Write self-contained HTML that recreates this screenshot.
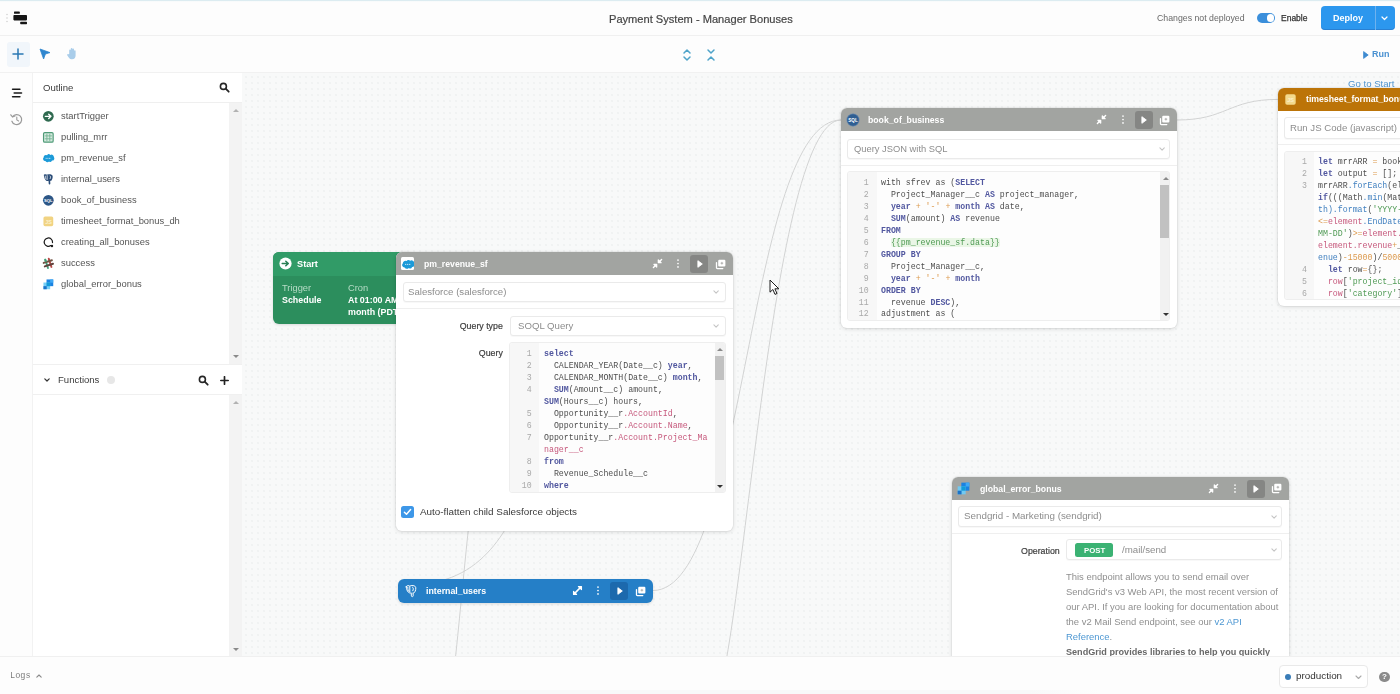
<!DOCTYPE html>
<html lang="en">
<head>
<meta charset="utf-8">
<title>Payment System - Manager Bonuses</title>
<style>
*{box-sizing:border-box;margin:0;padding:0}
html,body{width:1400px;height:694px;overflow:hidden;background:#fdfdfd;font-family:"Liberation Sans",sans-serif;color:#3a3a3a}
.abs{position:absolute}
.t,.oi,.ttl,.tx,.lbl,.ln,.cl{will-change:transform}
.t{position:absolute;white-space:pre;line-height:1}
.mono{font-family:"Liberation Mono",monospace}
#topbar{position:absolute;left:0;top:0;width:1400px;height:36px;background:#fdfdfd;border-bottom:1px solid #f0f0f0}
#topline{position:absolute;left:0;top:0;width:1400px;height:2px;background:linear-gradient(#dcecf1,#dcecf1 50%,#f4f9fa 50%,#fdfdfd)}
#toolbar{position:absolute;left:0;top:36px;width:1400px;height:37px;background:#fdfdfd;border-bottom:1px solid #f1f1f1}
#rail{position:absolute;left:0;top:73px;width:33px;height:583px;background:#fdfdfd;border-right:1px solid #f2f2f2}
#outline{position:absolute;left:33px;top:73px;width:209px;height:583px;background:#fff}
#canvas{position:absolute;left:242px;top:73px;width:1158px;height:583px;overflow:hidden;background-color:#f8f9f9;
 background-image:radial-gradient(circle,#f0f2f2 0.7px,rgba(240,242,242,0) 1.2px);background-size:6px 6px;background-position:1px 1px}
#bottombar{position:absolute;left:0;top:656px;width:1400px;height:38px;background:#fdfdfd;border-top:1px solid #f0f0f0}
.sbar{position:absolute;background:#f3f3f3}
.tri-up{position:absolute;width:0;height:0;border-left:3px solid transparent;border-right:3px solid transparent;border-bottom:3.5px solid #9a9a9a}
.tri-dn{position:absolute;width:0;height:0;border-left:3px solid transparent;border-right:3px solid transparent;border-top:3.5px solid #555}
.oi{position:absolute;left:60.5px;font-size:9.4px;color:#555;white-space:pre;line-height:12px}
.ico{position:absolute}
/* blocks */
.blk{position:absolute;background:#fff;border-radius:6px;box-shadow:0 1px 4px rgba(0,0,0,.13),0 0 0 1px rgba(0,0,0,.035)}
.hdr{position:absolute;left:0;top:0;right:0;height:23px;background:#a2a4a1;border-radius:6px 6px 0 0}
.ttl{position:absolute;top:1px;height:23px;line-height:23.5px;font-size:8.7px;font-weight:700;color:#fff;white-space:pre}
.sel{position:absolute;height:20px;border:1px solid #eaeaea;border-radius:3px;background:#fff;box-shadow:0 1px 1px rgba(0,0,0,.03)}
.sel .tx{position:absolute;left:6px;top:0;line-height:18.5px;font-size:9.65px;color:#8d8d8d;white-space:pre}
.chev{position:absolute;width:7px;height:4px}
.lbl{position:absolute;font-size:8.8px;color:#3d3d3d;white-space:pre;line-height:12px;text-align:right;-webkit-text-stroke:0.2px #3d3d3d}
.code{position:absolute;background:#fdfdfd;border:1px solid #eeeeee;border-radius:3px;overflow:hidden}
.gut{position:absolute;left:0;top:0;bottom:0;background:#f7f7f7}
.ln{position:absolute;font-family:"Liberation Mono",monospace;font-size:8.25px;line-height:12px;color:#a9a9a9;text-align:right;white-space:pre}
.cl{position:absolute;font-family:"Liberation Mono",monospace;font-size:8.25px;line-height:12px;color:#4d4d4d;white-space:pre}
.k{color:#51579f;font-weight:700}
.p{color:#c6587c}
.g{color:#4f9a54}
.o{color:#dc9a4e}
.j{color:#3f7fbf}
.gb{color:#4f9a54;background:#eaf6e6;border-radius:2px}
.hdiv{position:absolute;left:0;right:0;height:1px;background:#efefef}
.pbtn{position:absolute;width:18px;height:18px;border-radius:3px;background:#858684}
</style>
</head>
<body>

<!-- ===== top bar ===== -->
<div id="topbar">
  <div id="topline"></div>
  <!-- drag dots -->
  <svg class="abs" style="left:5px;top:12px" width="4" height="12" viewBox="0 0 4 12"><circle cx="2" cy="2.5" r=".8" fill="#d2d2d2"/><circle cx="2" cy="6" r=".8" fill="#d2d2d2"/><circle cx="2" cy="9.5" r=".8" fill="#d2d2d2"/></svg>
  <!-- retool logo -->
  <svg class="abs" style="left:13px;top:11px" width="15" height="14" viewBox="0 0 15 14">
    <rect x="1" y=".6" width="5.8" height="2.2" rx=".6" fill="#151515"/>
    <rect x=".4" y="4" width="13.6" height="5.4" rx=".8" fill="#151515"/>
    <rect x="7.2" y="10.8" width="6.8" height="2.4" rx=".6" fill="#151515"/>
  </svg>
  <div class="t" style="left:608.5px;top:13.5px;font-size:11.1px;color:#454545;-webkit-text-stroke:.2px #454545">Payment System - Manager Bonuses</div>
  <div class="t" style="left:1156.5px;top:13.5px;font-size:8.75px;color:#686868">Changes not deployed</div>
  <!-- toggle -->
  <div class="abs" style="left:1257px;top:13px;width:18px;height:9.6px;border-radius:5px;background:#3b8fdb"></div>
  <div class="abs" style="left:1266.5px;top:14px;width:7.6px;height:7.6px;border-radius:50%;background:#fff"></div>
  <div class="t" style="left:1281px;top:13.7px;font-size:8.5px;color:#333;-webkit-text-stroke:.25px #333">Enable</div>
  <!-- deploy -->
  <div class="abs" style="left:1320.5px;top:6px;width:74.5px;height:24px;border-radius:4px;background:#2c97ee;box-shadow:inset 0 -1px 0 rgba(40,110,190,.55)"></div>
  <div class="abs" style="left:1375px;top:6px;width:1px;height:24px;background:#6fb2ee"></div>
  <div class="t" style="left:1332.5px;top:13.9px;font-size:9px;font-weight:700;color:#fff">Deploy</div>
  <svg class="abs" style="left:1381px;top:16px" width="7" height="5" viewBox="0 0 7 5"><path d="M1 1 L3.5 3.5 L6 1" fill="none" stroke="#fff" stroke-width="1.2" stroke-linecap="round" stroke-linejoin="round"/></svg>
</div>

<!-- ===== toolbar ===== -->
<div id="toolbar">
  <div class="abs" style="left:6.5px;top:6px;width:23.5px;height:25px;border-radius:3px;background:#f1f6fb"></div>
  <svg class="abs" style="left:11.8px;top:11.8px" width="12" height="12" viewBox="0 0 12 12"><path d="M6 1 V11 M1 6 H11" stroke="#2a78b4" stroke-width="1.5" stroke-linecap="round"/></svg>
  <!-- pointer -->
  <svg class="abs" style="left:39px;top:12.3px" width="12" height="12" viewBox="0 0 12 12"><path d="M1 1 L11 4.6 L6.4 6 L4.6 11 Z" fill="#2f86cf" stroke="#2f86cf" stroke-width=".8" stroke-linejoin="round"/></svg>
  <!-- hand -->
  <svg class="abs" style="left:66px;top:11.2px" width="12" height="13" viewBox="0 0 12 13"><path d="M3.2 7 V3.2 a.8.8 0 0 1 1.6 0 V6 V1.8 a.8.8 0 0 1 1.6 0 V6 V2.4 a.8.8 0 0 1 1.6 0 V6.4 V4 a.8.8 0 0 1 1.6 0 V8.6 a3.6 3.6 0 0 1 -3.6 3.6 H5.6 a3 3 0 0 1 -2.5 -1.3 L1.2 8.2 a.8.8 0 0 1 1.3 -.9 Z" fill="#a9cdea"/></svg>
  <!-- expand / collapse -->
  <svg class="abs" style="left:682px;top:12px" width="10" height="14" viewBox="0 0 10 14"><path d="M2 5 L5 2 L8 5 M2 9 L5 12 L8 9" fill="none" stroke="#4ea3c9" stroke-width="1.5" stroke-linecap="round" stroke-linejoin="round"/></svg>
  <svg class="abs" style="left:706px;top:12px" width="10" height="14" viewBox="0 0 10 14"><path d="M2 2 L5 5 L8 2 M2 12 L5 9 L8 12" fill="none" stroke="#4ea3c9" stroke-width="1.5" stroke-linecap="round" stroke-linejoin="round"/></svg>
  <!-- run -->
  <svg class="abs" style="left:1363px;top:14.5px" width="6" height="8" viewBox="0 0 6 8"><path d="M.6 .6 L5.2 4 L.6 7.4 Z" fill="#3f8bd0" stroke="#3f8bd0" stroke-width=".8" stroke-linejoin="round"/></svg>
  <div class="t" style="left:1372.3px;top:14px;font-size:9px;font-weight:700;color:#4a91d1">Run</div>
</div>

<!-- ===== left rail ===== -->
<div id="rail">
  <svg class="abs" style="left:10.5px;top:14.6px" width="12" height="10" viewBox="0 0 12 10"><path d="M1.6 1.3 H8.9 M3.2 5.05 H10.5 M1.6 8.8 H8.9" stroke="#1a1a1a" stroke-width="1.6" stroke-linecap="round"/></svg>
  <svg class="abs" style="left:10px;top:39.5px" width="13" height="13" viewBox="0 0 13 13"><path d="M2.6 3.6 A5 5 0 1 1 1.9 8.2" fill="none" stroke="#9a9a9a" stroke-width="1.2" stroke-linecap="round"/><path d="M.8 1.8 L2.5 4 L5 3" fill="none" stroke="#9a9a9a" stroke-width="1.2" stroke-linecap="round" stroke-linejoin="round"/><path d="M6.8 4 V6.9 L8.6 8" fill="none" stroke="#9a9a9a" stroke-width="1.1" stroke-linecap="round" stroke-linejoin="round"/></svg>
</div>

<!-- ===== outline panel ===== -->
<div id="outline">
  <div class="t" style="left:9.5px;top:9.5px;font-size:9.55px;color:#3b3b3b">Outline</div>
  <svg class="abs" style="left:186px;top:9px" width="11" height="11" viewBox="0 0 11 11"><circle cx="4.4" cy="4.4" r="3" fill="none" stroke="#262626" stroke-width="1.6"/><path d="M6.7 6.7 L9.7 9.7" stroke="#262626" stroke-width="1.8" stroke-linecap="round"/></svg>
  <div class="hdiv" style="top:29px;background:#efefef"></div>
  <!-- scrollbar 1 -->
  <div class="sbar" style="left:196px;top:30px;width:13px;height:261px"></div>
  <div class="tri-up" style="left:199.5px;top:35.5px;border-bottom-color:#b2b2b2"></div>
  <div class="tri-dn" style="left:199.5px;top:282px;border-top-color:#8a8a8a"></div>
  <!-- outline items -->
  <svg class="ico" style="left:9.15px;top:37.15px" width="12.7" height="12.7" viewBox="0 0 14 14"><circle cx="7" cy="7" r="5.9" fill="#2f6a50"/><path d="M3.6 7 H9.6 M7.4 4.6 L9.9 7 L7.4 9.4" fill="none" stroke="#fff" stroke-width="1.5" stroke-linecap="round" stroke-linejoin="round"/></svg>
  <div class="oi" style="left:27.5px;top:36.8px">startTrigger</div>
  <svg class="ico" style="left:9.15px;top:58.15px" width="12.7" height="12.7" viewBox="0 0 14 14"><rect x="1.7" y="1.7" width="10.6" height="10.6" rx="1.4" fill="#d5eadf" stroke="#4f9b78" stroke-width="1.3"/><path d="M5.4 3 V11 M8.6 3 V11 M3 5.4 H11 M3 8.6 H11" stroke="#6fb08f" stroke-width=".9"/></svg>
  <div class="oi" style="left:27.5px;top:57.8px">pulling_mrr</div>
  <svg class="ico" style="left:9.15px;top:79.15px" width="12.7" height="12.7" viewBox="0 0 14 14"><path d="M5.6 3.6 a2.3 2.3 0 0 1 3.6 -.4 a2.6 2.6 0 0 1 3.9 2.4 a2.4 2.4 0 0 1 -2 3.9 a2.2 2.2 0 0 1 -3.3 .9 a2.5 2.5 0 0 1 -4.1 -.5 a2.3 2.3 0 0 1 -1.9 -3.9 a2.6 2.6 0 0 1 3.8 -2.4 Z" fill="#1c9ad8"/><path d="M4 7 H10" stroke="#bfe4f6" stroke-width="1.1" stroke-dasharray="1.2 .7"/></svg>
  <div class="oi" style="left:27.5px;top:78.8px">pm_revenue_sf</div>
  <svg class="ico" style="left:9.15px;top:100.15px" width="12.7" height="12.7" viewBox="0 0 14 14"><path d="M2 2.2 C2 1 5 1 5.6 2 C6.4 1 11.6 .8 11.8 3.6 C12 6 10.6 8.6 9.8 8.8 C9.4 8.9 9.2 8.4 9 8.4 L9.2 11.6 C9.2 13 7.4 13 7.4 11.8 L7.2 8.6 C5 9.4 2.6 7.8 2 2.2 Z" fill="#2b4d78"/><path d="M5.7 2.4 V7.6 M8.6 3 C9.6 3.4 9.6 5.4 8.8 6.6 M3.6 3 C3.4 4.6 4 6.2 4.6 7" fill="none" stroke="#fff" stroke-width=".8"/></svg>
  <div class="oi" style="left:27.5px;top:99.8px">internal_users</div>
  <svg class="ico" style="left:9.15px;top:121.15px" width="12.7" height="12.7" viewBox="0 0 14 14"><circle cx="7" cy="7" r="5.9" fill="#2c5686"/><text x="7" y="8.7" font-family="Liberation Sans" font-size="4.6" font-weight="700" fill="#fff" text-anchor="middle">SQL</text></svg>
  <div class="oi" style="left:27.5px;top:120.8px">book_of_business</div>
  <svg class="ico" style="left:9.15px;top:142.15px" width="12.7" height="12.7" viewBox="0 0 14 14"><rect x="1.6" y="1.6" width="10.8" height="10.8" rx="1.8" fill="#f1d382"/><text x="7.2" y="9.6" font-family="Liberation Sans" font-size="6" font-weight="700" fill="#fbf1cf" text-anchor="middle">JS</text></svg>
  <div class="oi" style="left:27.5px;top:141.8px">timesheet_format_bonus_dh</div>
  <svg class="ico" style="left:9.15px;top:163.15px" width="12.7" height="12.7" viewBox="0 0 14 14"><path d="M9.6 10.6 A4.6 4.6 0 1 1 11.6 7.2" fill="none" stroke="#1d1d1d" stroke-width="1.35" stroke-linecap="round"/><circle cx="11" cy="11" r="1.35" fill="#1d1d1d"/></svg>
  <div class="oi" style="left:27.5px;top:162.8px">creating_all_bonuses</div>
  <svg class="ico" style="left:9.15px;top:184.15px" width="12.7" height="12.7" viewBox="0 0 14 14"><g transform="rotate(-18 7 7)" stroke-linecap="round" stroke-width="2.1" opacity=".95"><path d="M5 2.2 V11.8" stroke="#3a9a72"/><path d="M9 2.2 V11.8" stroke="#b5403c"/><path d="M2.2 5 H11.8" stroke="#6b4a3a"/><path d="M2.2 9 H11.8" stroke="#5a3a34"/><path d="M5 2.2 V4" stroke="#3a9a72"/></g></svg>
  <div class="oi" style="left:27.5px;top:183.8px">success</div>
  <svg class="ico" style="left:9.15px;top:205.15px" width="12.7" height="12.7" viewBox="0 0 14 14"><rect x="5" y="1.6" width="7.4" height="7.4" fill="#1a82e2"/><rect x="1.6" y="5" width="7.4" height="7.4" fill="#6fcbf6" opacity=".95"/><rect x="5" y="5" width="4" height="4" fill="#129bd9"/><rect x="1.6" y="9" width="3.6" height="3.4" fill="#1a73c9"/><rect x="9" y="1.6" width="3.4" height="3.6" fill="#3fa9f5"/></svg>
  <div class="oi" style="left:27.5px;top:204.8px">global_error_bonus</div>
  <!-- functions -->
  <div class="hdiv" style="top:291px;background:#f0f0f0"></div>
  <svg class="abs" style="left:11px;top:305px" width="6" height="4" viewBox="0 0 6 4"><path d="M.8 .8 L3 3 L5.2 .8" fill="none" stroke="#333" stroke-width="1.2" stroke-linecap="round" stroke-linejoin="round"/></svg>
  <div class="t" style="left:24.5px;top:301.5px;font-size:9.55px;color:#3b3b3b">Functions</div>
  <div class="abs" style="left:74px;top:302.5px;width:8px;height:8px;border-radius:50%;background:#e7e7e7"></div>
  <svg class="abs" style="left:165px;top:301.5px" width="11" height="11" viewBox="0 0 11 11"><circle cx="4.4" cy="4.4" r="3" fill="none" stroke="#262626" stroke-width="1.6"/><path d="M6.7 6.7 L9.7 9.7" stroke="#262626" stroke-width="1.8" stroke-linecap="round"/></svg>
  <svg class="abs" style="left:187px;top:302.5px" width="9" height="9" viewBox="0 0 9 9"><path d="M4.5 .8 V8.2 M.8 4.5 H8.2" stroke="#222" stroke-width="1.7" stroke-linecap="round"/></svg>
  <div class="hdiv" style="top:321px;background:#f0f0f0"></div>
  <div class="sbar" style="left:196px;top:322px;width:13px;height:261px"></div>
  <div class="tri-up" style="left:199.5px;top:328px;border-bottom-color:#b2b2b2"></div>
  <div class="tri-dn" style="left:199.5px;top:575px;border-top-color:#8a8a8a"></div>
</div>

<!-- ===== canvas ===== -->
<div id="canvas"></div>
<div id="cv" class="abs" style="left:0;top:0;width:1400px;height:656px;overflow:hidden">
<svg class="abs" style="left:0;top:0" width="1400" height="656" viewBox="0 0 1400 656"><g fill="none" stroke="#d2d3d3" stroke-width="1">
<path d="M653,590.5 C747,590.5 747,120 841,120"/>
<path d="M841,120 C766.8,120 741.2,712.7 708.7,712.7"/>
<path d="M1177,120 C1227,120 1228,99.4 1278,99.4"/>
<path d="M468.4,529 C465,560 459.5,620 455.2,660"/>
<path d="M505.5,529 C492,551 472,573 440,581"/>
</g></svg>
<div class="t" style="left:1347.5px;top:78.5px;font-size:9.6px;color:#4f94cf">Go to Start</div>
<div class="blk" style="left:273px;top:252px;width:140px;height:71.5px;background:#2c8e5d;border-radius:6px;box-shadow:0 1px 3px rgba(0,0,0,.12)">
<div class="abs" style="left:0;top:0;right:0;height:23.5px;background:#319b67;border-radius:6px 6px 0 0"></div>
<svg class="abs" style="left:5.6px;top:4.6px" width="13" height="13" viewBox="0 0 13 13"><circle cx="6.5" cy="6.5" r="6.1" fill="#fff"/><path d="M3.2 6.5 H9 M6.8 4.2 L9.3 6.5 L6.8 8.8" fill="none" stroke="#2a7f55" stroke-width="1.5" stroke-linecap="round" stroke-linejoin="round"/></svg>
<div class="ttl" style="left:24px;font-size:9.2px">Start</div>
<div class="t" style="left:9.4px;top:32.2px;font-size:9.3px;color:#b6dcc6">Trigger</div>
<div class="t" style="left:9px;top:44.1px;font-size:8.9px;font-weight:700;color:#fff">Schedule</div>
<div class="t" style="left:74.6px;top:32.2px;font-size:9.3px;color:#b6dcc6">Cron</div>
<div class="t" style="left:74.6px;top:44.1px;font-size:8.9px;font-weight:700;color:#fff">At 01:00 AM</div>
<div class="t" style="left:74.6px;top:55.6px;font-size:8.9px;font-weight:700;color:#fff">month (PDT)</div>
</div>
<div class="blk" style="left:396px;top:252px;width:336.5px;height:279px">
<div class="hdr"></div>
<div class="abs" style="left:5.3px;top:5.4px;width:12.4px;height:12.4px;background:#fff;border-radius:1.5px"></div>
<svg class="abs" style="left:5.5px;top:6.5px" width="12" height="10" viewBox="1 1.5 12 10"><path d="M5.6 3.6 a2.3 2.3 0 0 1 3.6 -.4 a2.6 2.6 0 0 1 3.9 2.4 a2.4 2.4 0 0 1 -2 3.9 a2.2 2.2 0 0 1 -3.3 .9 a2.5 2.5 0 0 1 -4.1 -.5 a2.3 2.3 0 0 1 -1.9 -3.9 a2.6 2.6 0 0 1 3.8 -2.4 Z" fill="#1c9ad8"/><path d="M4 6.9 H10" stroke="#bfe4f6" stroke-width="1" stroke-dasharray="1.2 .7"/></svg>
<div class="ttl" style="left:27.5px">pm_revenue_sf</div>
<svg class="abs" style="left:255.8px;top:6px" width="11" height="11" viewBox="0 0 11 11"><g fill="#fff" stroke="#fff" stroke-width="1.2" stroke-linecap="round" stroke-linejoin="round"><path d="M9.6 1.4 L7 4" fill="none" stroke-width="1.4"/><path d="M6.3 1.9 V4.7 H9.1 Z"/><path d="M1.4 9.6 L4 7" fill="none" stroke-width="1.4"/><path d="M1.9 6.3 H4.7 V9.1 Z"/></g></svg><svg class="abs" style="left:280.3px;top:6px" width="4" height="11" viewBox="0 0 4 11"><circle cx="2" cy="2.1" r=".85" fill="#fff"/><circle cx="2" cy="5.5" r=".85" fill="#fff"/><circle cx="2" cy="8.9" r=".85" fill="#fff"/></svg><div class="pbtn" style="left:294.2px;top:3px;background:#858684"></div><svg class="abs" style="left:299.8px;top:7.1px" width="8" height="10" viewBox="0 0 8 10"><path d="M1.9 1.7 L6.3 5 L1.9 8.3 Z" fill="#fff" stroke="#fff" stroke-width=".9" stroke-linejoin="round"/></svg><svg class="abs" style="left:318.9px;top:6.8px" width="11" height="11" viewBox="0 0 11 11"><rect x="3.2" y=".8" width="7.2" height="6.8" rx="1.1" fill="#fff"/><path d="M1.5 3.6 V8.7 a.9.9 0 0 0 .9 .9 H7.8" fill="none" stroke="#fff" stroke-width="1.3" stroke-linecap="round"/><path d="M5.6 4.2 H8.2 M6.9 2.9 V5.5" stroke="#a8a9a7" stroke-width=".9"/></svg>
<div class="sel" style="left:6.6px;top:30px;width:323.2px;height:20.4px"><div class="tx" style="left:4.8px">Salesforce (salesforce)</div><svg class="abs" style="left:309.9px;top:7.1px" width="6.2" height="4.4" viewBox="0 0 7 5"><path d="M1 1 L3.5 3.5 L6 1" fill="none" stroke="#c4c4c4" stroke-width="1.2" stroke-linecap="round" stroke-linejoin="round"/></svg></div>
<div class="hdiv" style="top:56px"></div>
<div class="lbl" style="left:40px;width:66.8px;top:67.5px">Query type</div>
<div class="sel" style="left:113.6px;top:64px;width:216.2px;height:20px"><div class="tx" style="left:7.2px">SOQL Query</div><svg class="abs" style="left:202.9px;top:7.1px" width="6.2" height="4.4" viewBox="0 0 7 5"><path d="M1 1 L3.5 3.5 L6 1" fill="none" stroke="#c4c4c4" stroke-width="1.2" stroke-linecap="round" stroke-linejoin="round"/></svg></div>
<div class="lbl" style="left:40px;width:66.8px;top:95.3px">Query</div>
<div class="code" style="left:113px;top:89.8px;width:216.6px;height:151px">
<div class="gut" style="width:28.6px"></div>
<div class="ln" style="left:0;width:21.6px;top:4.90px">1</div>
<div class="cl" style="left:33.7px;top:4.90px"><span class="k">select</span></div>
<div class="ln" style="left:0;width:21.6px;top:16.90px">2</div>
<div class="cl" style="left:33.7px;top:16.90px">  CALENDAR_YEAR(Date__c) <span class="k">year</span>,</div>
<div class="ln" style="left:0;width:21.6px;top:28.90px">3</div>
<div class="cl" style="left:33.7px;top:28.90px">  CALENDAR_MONTH(Date__c) <span class="k">month</span>,</div>
<div class="ln" style="left:0;width:21.6px;top:40.90px">4</div>
<div class="cl" style="left:33.7px;top:40.90px">  <span class="k">SUM</span>(Amount__c) amount,</div>
<div class="cl" style="left:33.7px;top:52.90px"><span class="k">SUM</span>(Hours__c) hours,</div>
<div class="ln" style="left:0;width:21.6px;top:64.90px">5</div>
<div class="cl" style="left:33.7px;top:64.90px">  Opportunity__r<span class="p">.AccountId</span>,</div>
<div class="ln" style="left:0;width:21.6px;top:76.90px">6</div>
<div class="cl" style="left:33.7px;top:76.90px">  Opportunity__r<span class="p">.Account.Name</span>,</div>
<div class="ln" style="left:0;width:21.6px;top:88.90px">7</div>
<div class="cl" style="left:33.7px;top:88.90px">Opportunity__r<span class="p">.Account.Project_Ma</span></div>
<div class="cl" style="left:33.7px;top:100.90px"><span class="p">nager__c</span></div>
<div class="ln" style="left:0;width:21.6px;top:112.90px">8</div>
<div class="cl" style="left:33.7px;top:112.90px"><span class="k">from</span></div>
<div class="ln" style="left:0;width:21.6px;top:124.90px">9</div>
<div class="cl" style="left:33.7px;top:124.90px">  Revenue_Schedule__c</div>
<div class="ln" style="left:0;width:21.6px;top:136.90px">10</div>
<div class="cl" style="left:33.7px;top:136.90px"><span class="k">where</span></div>
<div class="abs" style="left:204.5px;top:0;width:10.3px;bottom:0;background:#f1f1f1"></div>
<div class="abs" style="left:205.0px;top:13.4px;width:9.3px;height:23.6px;background:#c1c1c1"></div>
<div class="tri-up" style="left:206.7px;top:5px;border-bottom-color:#8a8a8a"></div>
<div class="tri-dn" style="left:206.7px;top:142px;border-top-color:#333"></div>
</div>
<div class="abs" style="left:5.2px;top:253.5px;width:12.4px;height:12.4px;border-radius:2.5px;background:#3d97e8"></div>
<svg class="abs" style="left:7.2px;top:256px" width="9" height="8" viewBox="0 0 9 8"><path d="M1.4 4.2 L3.5 6.2 L7.6 1.6" fill="none" stroke="#fff" stroke-width="1.5" stroke-linecap="round" stroke-linejoin="round"/></svg>
<div class="t" style="left:23.6px;top:254.8px;font-size:9.9px;color:#3a3a3a">Auto-flatten child Salesforce objects</div>
</div>
<div class="blk" style="left:398.2px;top:579px;width:254.8px;height:23.6px;background:#257fc7;box-shadow:0 1px 3px rgba(0,0,0,.12)">
<svg class="abs" style="left:5.6px;top:4.7px" width="14" height="14" viewBox="0 0 14 14"><path d="M2.2 2.8 C2.2 1.4 5 1.2 5.8 2.2 C6.8 1.2 11.6 1 11.8 3.8 C12 6.2 10.6 8.8 9.8 9 C9.4 9.1 9.2 8.6 9 8.6 L9.2 11.6 C9.2 13 7.4 13 7.4 11.8 L7.2 8.8 C5.2 9.6 2.8 8 2.2 2.8 Z M5.8 2.6 V7.8 M8.6 3.2 C9.6 3.6 9.6 5.6 8.8 6.8 M3.8 3.2 C3.6 4.8 4.2 6.4 4.8 7.2" fill="none" stroke="#fff" stroke-width="1" stroke-linejoin="round" stroke-linecap="round"/></svg>
<div class="ttl" style="left:27.8px;line-height:23.2px;font-size:8.8px">internal_users</div>
<svg class="abs" style="left:173.8px;top:6px" width="11" height="11" viewBox="0 0 11 11"><g fill="#fff" stroke="#fff" stroke-width="1.1" stroke-linecap="round" stroke-linejoin="round"><path d="M8.6 2.4 L2.4 8.6" fill="none" stroke-width="1.5"/><path d="M6.4 1.5 H9.5 V4.6 Z"/><path d="M1.5 6.4 V9.5 H4.6 Z"/></g></svg><svg class="abs" style="left:198.3px;top:6px" width="4" height="11" viewBox="0 0 4 11"><circle cx="2" cy="2.1" r=".85" fill="#fff"/><circle cx="2" cy="5.5" r=".85" fill="#fff"/><circle cx="2" cy="8.9" r=".85" fill="#fff"/></svg><div class="pbtn" style="left:212.2px;top:3px;background:#1c69ad"></div><svg class="abs" style="left:217.8px;top:7.1px" width="8" height="10" viewBox="0 0 8 10"><path d="M1.9 1.7 L6.3 5 L1.9 8.3 Z" fill="#fff" stroke="#fff" stroke-width=".9" stroke-linejoin="round"/></svg><svg class="abs" style="left:236.9px;top:6.8px" width="11" height="11" viewBox="0 0 11 11"><rect x="3.2" y=".8" width="7.2" height="6.8" rx="1.1" fill="#fff"/><path d="M1.5 3.6 V8.7 a.9.9 0 0 0 .9 .9 H7.8" fill="none" stroke="#fff" stroke-width="1.3" stroke-linecap="round"/><path d="M5.6 4.2 H8.2 M6.9 2.9 V5.5" stroke="#a8a9a7" stroke-width=".9"/></svg>
</div>
<div class="blk" style="left:840.5px;top:108px;width:336.5px;height:219.5px">
<div class="hdr"></div>
<svg class="abs" style="left:5.1px;top:4.7px" width="14" height="14" viewBox="0 0 14 14"><circle cx="7" cy="7" r="6.2" fill="#2f5e92"/><circle cx="7" cy="7" r="6.2" fill="none" stroke="#6f8fb4" stroke-width=".6"/><text x="7" y="8.7" font-family="Liberation Sans" font-size="4.6" font-weight="700" fill="#fff" text-anchor="middle">SQL</text></svg>
<div class="ttl" style="left:27.8px">book_of_business</div>
<svg class="abs" style="left:255.8px;top:6px" width="11" height="11" viewBox="0 0 11 11"><g fill="#fff" stroke="#fff" stroke-width="1.2" stroke-linecap="round" stroke-linejoin="round"><path d="M9.6 1.4 L7 4" fill="none" stroke-width="1.4"/><path d="M6.3 1.9 V4.7 H9.1 Z"/><path d="M1.4 9.6 L4 7" fill="none" stroke-width="1.4"/><path d="M1.9 6.3 H4.7 V9.1 Z"/></g></svg><svg class="abs" style="left:280.3px;top:6px" width="4" height="11" viewBox="0 0 4 11"><circle cx="2" cy="2.1" r=".85" fill="#fff"/><circle cx="2" cy="5.5" r=".85" fill="#fff"/><circle cx="2" cy="8.9" r=".85" fill="#fff"/></svg><div class="pbtn" style="left:294.2px;top:3px;background:#858684"></div><svg class="abs" style="left:299.8px;top:7.1px" width="8" height="10" viewBox="0 0 8 10"><path d="M1.9 1.7 L6.3 5 L1.9 8.3 Z" fill="#fff" stroke="#fff" stroke-width=".9" stroke-linejoin="round"/></svg><svg class="abs" style="left:318.9px;top:6.8px" width="11" height="11" viewBox="0 0 11 11"><rect x="3.2" y=".8" width="7.2" height="6.8" rx="1.1" fill="#fff"/><path d="M1.5 3.6 V8.7 a.9.9 0 0 0 .9 .9 H7.8" fill="none" stroke="#fff" stroke-width="1.3" stroke-linecap="round"/><path d="M5.6 4.2 H8.2 M6.9 2.9 V5.5" stroke="#a8a9a7" stroke-width=".9"/></svg>
<div class="sel" style="left:6.6px;top:30.6px;width:323.2px"><div class="tx" style="font-size:9.35px">Query JSON with SQL</div><svg class="abs" style="left:311.4px;top:7.3px" width="6.2" height="4.4" viewBox="0 0 7 5"><path d="M1 1 L3.5 3.5 L6 1" fill="none" stroke="#c4c4c4" stroke-width="1.2" stroke-linecap="round" stroke-linejoin="round"/></svg></div>
<div class="hdiv" style="top:56.5px"></div>
<div class="code" style="left:6.6px;top:62.5px;width:323.2px;height:150.9px">
<div class="gut" style="width:28.6px"></div>
<div class="ln" style="left:0;width:20.7px;top:5.30px">1</div>
<div class="cl" style="left:32.7px;top:5.30px">with sfrev as (<span class="k">SELECT</span></div>
<div class="ln" style="left:0;width:20.7px;top:17.27px">2</div>
<div class="cl" style="left:32.7px;top:17.27px">  Project_Manager__c <span class="k">AS</span> project_manager,</div>
<div class="ln" style="left:0;width:20.7px;top:29.24px">3</div>
<div class="cl" style="left:32.7px;top:29.24px">  <span class="k">year</span> <span class="o">+</span> <span class="o">'-'</span> <span class="o">+</span> <span class="k">month</span> <span class="k">AS</span> date,</div>
<div class="ln" style="left:0;width:20.7px;top:41.21px">4</div>
<div class="cl" style="left:32.7px;top:41.21px">  <span class="k">SUM</span>(amount) <span class="k">AS</span> revenue</div>
<div class="ln" style="left:0;width:20.7px;top:53.18px">5</div>
<div class="cl" style="left:32.7px;top:53.18px"><span class="k">FROM</span></div>
<div class="ln" style="left:0;width:20.7px;top:65.15px">6</div>
<div class="cl" style="left:32.7px;top:65.15px">  <span class='gb'>{{pm_revenue_sf.data}}</span></div>
<div class="ln" style="left:0;width:20.7px;top:77.12px">7</div>
<div class="cl" style="left:32.7px;top:77.12px"><span class="k">GROUP BY</span></div>
<div class="ln" style="left:0;width:20.7px;top:89.09px">8</div>
<div class="cl" style="left:32.7px;top:89.09px">  Project_Manager__c,</div>
<div class="ln" style="left:0;width:20.7px;top:101.06px">9</div>
<div class="cl" style="left:32.7px;top:101.06px">  <span class="k">year</span> <span class="o">+</span> <span class="o">'-'</span> <span class="o">+</span> <span class="k">month</span></div>
<div class="ln" style="left:0;width:20.7px;top:113.03px">10</div>
<div class="cl" style="left:32.7px;top:113.03px"><span class="k">ORDER BY</span></div>
<div class="ln" style="left:0;width:20.7px;top:125.00px">11</div>
<div class="cl" style="left:32.7px;top:125.00px">  revenue <span class="k">DESC</span>),</div>
<div class="ln" style="left:0;width:20.7px;top:136.97px">12</div>
<div class="cl" style="left:32.7px;top:136.97px">adjustment as (</div>
<div class="abs" style="left:311.5px;top:0;width:11.2px;bottom:0;background:#f1f1f1"></div>
<div class="abs" style="left:312px;top:13.4px;width:9.7px;height:52.8px;background:#c1c1c1"></div>
<div class="tri-up" style="left:314.6px;top:5px;border-bottom-color:#8a8a8a"></div>
<div class="tri-dn" style="left:314.6px;top:141.2px;border-top-color:#333"></div>
</div>
</div>
<div class="blk" style="left:1278.2px;top:87.8px;width:340px;height:218.6px">
<div class="hdr" style="background:#bc7408;height:23.2px"></div>
<svg class="abs" style="left:6.6px;top:6.4px" width="11" height="11" viewBox="0 0 11 11"><rect x=".3" y=".3" width="10.4" height="10.4" rx="1.8" fill="#f3d98c"/><text x="5.6" y="8.2" font-family="Liberation Sans" font-size="5.6" font-weight="700" fill="#fbefc9" text-anchor="middle">JS</text></svg>
<div class="ttl" style="left:27.8px;top:0">timesheet_format_bonus_dh</div>
<div class="sel" style="left:6px;top:29.6px;width:330px;height:21.2px"><div class="tx" style="left:4.8px;line-height:19.6px">Run JS Code (javascript)</div></div>
<div class="hdiv" style="top:56.5px"></div>
<div class="code" style="left:6px;top:62.9px;width:330px;height:149.6px">
<div class="gut" style="width:28.6px"></div>
<div class="ln" style="left:0;width:21.9px;top:4.20px">1</div>
<div class="cl" style="left:32.9px;top:4.20px"><span class="k">let</span> mrrARR <span class="o">=</span> book_of_business.data;</div>
<div class="ln" style="left:0;width:21.9px;top:16.17px">2</div>
<div class="cl" style="left:32.9px;top:16.17px"><span class="k">let</span> output <span class="o">=</span> [];</div>
<div class="ln" style="left:0;width:21.9px;top:28.14px">3</div>
<div class="cl" style="left:32.9px;top:28.14px">mrrARR<span class="j">.forEach</span>(element =&gt; {</div>
<div class="cl" style="left:32.9px;top:40.11px"><span class="k">if</span>(((Math<span class="j">.min</span>(Math.max(</div>
<div class="cl" style="left:32.9px;top:52.08px"><span class="j">th)</span><span class="j">.format</span>(<span class="g">'YYYY-MM-DD'</span>)</div>
<div class="cl" style="left:32.9px;top:64.05px"><span class="o">&lt;=</span><span class="p">element</span><span class="j">.EndDate</span> &amp;&amp; moment</div>
<div class="cl" style="left:32.9px;top:76.02px"><span class="g">MM-DD'</span>)<span class="o">&gt;=</span><span class="p">element.StartDate</span></div>
<div class="cl" style="left:32.9px;top:87.99px"><span class="p">element.revenue</span><span class="o">+</span>_.sumBy(x, 'rev</div>
<div class="cl" style="left:32.9px;top:99.96px"><span class="j">enue</span>)<span class="o">-15000</span>)/<span class="o">5000</span>)</div>
<div class="ln" style="left:0;width:21.9px;top:111.93px">4</div>
<div class="cl" style="left:32.9px;top:111.93px">  <span class="k">let</span> row<span class="o">=</span>{};</div>
<div class="ln" style="left:0;width:21.9px;top:123.90px">5</div>
<div class="cl" style="left:32.9px;top:123.90px">  <span class="p">row</span>[<span class="g">'project_id'</span>] = element.id;</div>
<div class="ln" style="left:0;width:21.9px;top:135.87px">6</div>
<div class="cl" style="left:32.9px;top:135.87px">  <span class="p">row</span>[<span class="g">'category'</span>] = 'bonus';</div>
</div>
</div>
<div class="blk" style="left:952px;top:476.7px;width:337px;height:260px">
<div class="hdr"></div>
<svg class="abs" style="left:5.4px;top:5px" width="13" height="13" viewBox="1 1 12 12"><rect x="5" y="1.6" width="7.4" height="7.4" fill="#1a82e2"/><rect x="1.6" y="5" width="7.4" height="7.4" fill="#6fcbf6" opacity=".95"/><rect x="5" y="5" width="4" height="4" fill="#129bd9"/><rect x="1.6" y="9" width="3.6" height="3.4" fill="#1a73c9"/><rect x="9" y="1.6" width="3.4" height="3.6" fill="#3fa9f5"/></svg>
<div class="ttl" style="left:27.7px">global_error_bonus</div>
<svg class="abs" style="left:256.3px;top:6px" width="11" height="11" viewBox="0 0 11 11"><g fill="#fff" stroke="#fff" stroke-width="1.2" stroke-linecap="round" stroke-linejoin="round"><path d="M9.6 1.4 L7 4" fill="none" stroke-width="1.4"/><path d="M6.3 1.9 V4.7 H9.1 Z"/><path d="M1.4 9.6 L4 7" fill="none" stroke-width="1.4"/><path d="M1.9 6.3 H4.7 V9.1 Z"/></g></svg><svg class="abs" style="left:280.8px;top:6px" width="4" height="11" viewBox="0 0 4 11"><circle cx="2" cy="2.1" r=".85" fill="#fff"/><circle cx="2" cy="5.5" r=".85" fill="#fff"/><circle cx="2" cy="8.9" r=".85" fill="#fff"/></svg><div class="pbtn" style="left:294.7px;top:3px;background:#858684"></div><svg class="abs" style="left:300.3px;top:7.1px" width="8" height="10" viewBox="0 0 8 10"><path d="M1.9 1.7 L6.3 5 L1.9 8.3 Z" fill="#fff" stroke="#fff" stroke-width=".9" stroke-linejoin="round"/></svg><svg class="abs" style="left:319.4px;top:6.8px" width="11" height="11" viewBox="0 0 11 11"><rect x="3.2" y=".8" width="7.2" height="6.8" rx="1.1" fill="#fff"/><path d="M1.5 3.6 V8.7 a.9.9 0 0 0 .9 .9 H7.8" fill="none" stroke="#fff" stroke-width="1.3" stroke-linecap="round"/><path d="M5.6 4.2 H8.2 M6.9 2.9 V5.5" stroke="#a8a9a7" stroke-width=".9"/></svg>
<div class="sel" style="left:6.2px;top:29.7px;width:324px;height:20.2px"><div class="tx" style="left:5.2px;font-size:9.8px">Sendgrid - Marketing (sendgrid)</div><svg class="abs" style="left:311.9px;top:7.4px" width="6.2" height="4.4" viewBox="0 0 7 5"><path d="M1 1 L3.5 3.5 L6 1" fill="none" stroke="#c4c4c4" stroke-width="1.2" stroke-linecap="round" stroke-linejoin="round"/></svg></div>
<div class="hdiv" style="top:56.3px"></div>
<div class="lbl" style="left:40px;width:67.7px;top:68.3px">Operation</div>
<div class="sel" style="left:113.5px;top:62.3px;width:216.7px;height:21.4px"><div class="abs" style="left:8.3px;top:3px;width:38.3px;height:14.4px;border-radius:2.5px;background:#3bb273"></div><div class="t" style="left:17.9px;top:7.2px;font-size:7.8px;font-weight:700;color:#fff">POST</div><div class="tx" style="left:55.7px;line-height:19px;font-size:9.7px">/mail/send</div><svg class="abs" style="left:204.4px;top:7.8px" width="6.2" height="4.4" viewBox="0 0 7 5"><path d="M1 1 L3.5 3.5 L6 1" fill="none" stroke="#c4c4c4" stroke-width="1.2" stroke-linecap="round" stroke-linejoin="round"/></svg></div>
<div class="t" style="left:114px;top:95.60px;font-size:9.45px;color:#8f8f8f">This endpoint allows you to send email over</div>
<div class="t" style="left:114px;top:110.55px;font-size:9.45px;color:#8f8f8f">SendGrid's v3 Web API, the most recent version of</div>
<div class="t" style="left:114px;top:125.50px;font-size:9.45px;color:#8f8f8f">our API. If you are looking for documentation about</div>
<div class="t" style="left:114px;top:140.45px;font-size:9.45px;color:#8f8f8f">the v2 Mail Send endpoint, see our <span style='color:#4d97d2'>v2 API</span></div>
<div class="t" style="left:114px;top:155.40px;font-size:9.45px;color:#8f8f8f"><span style='color:#4d97d2'>Reference</span>.</div>
<div class="t" style="left:114px;top:170.35px;font-size:9.45px;color:#8f8f8f"><b style='color:#686868;font-size:9.1px'>SendGrid provides libraries to help you quickly</b></div>
<div class="t" style="left:114px;top:185.30px;font-size:9.45px;color:#8f8f8f"><b style='color:#686868;font-size:9.1px'>and easily integrate with the v3 Web API in 7</b></div>
</div>
<svg class="abs" style="left:768.5px;top:279px" width="11" height="17" viewBox="0 0 11 17"><path d="M1 1 V13.2 L3.9 10.5 L6 15.4 L8 14.5 L5.9 9.8 H9.8 Z" fill="#fff" stroke="#1a1a1a" stroke-width="1" stroke-linejoin="round"/></svg>
</div>

<!-- ===== bottom bar ===== -->
<div id="bottombar">
  <div class="t mono" style="left:10px;top:14.5px;font-size:8.6px;color:#7d7d7d">Logs</div>
  <svg class="abs" style="left:36px;top:17px" width="6" height="4" viewBox="0 0 6 4"><path d="M.8 3.2 L3 1 L5.2 3.2" fill="none" stroke="#8a8a8a" stroke-width="1.1" stroke-linecap="round" stroke-linejoin="round"/></svg>
  <div class="abs" style="left:1278.5px;top:7.5px;width:89px;height:23.5px;border:1px solid #e9e9e9;border-radius:4px;background:#fff"></div>
  <div class="abs" style="left:1284.7px;top:16.5px;width:6px;height:6px;border-radius:50%;background:#3a7db8"></div>
  <div class="t" style="left:1295.5px;top:14.3px;font-size:9.9px;color:#333">production</div>
  <svg class="abs" style="left:1355px;top:18px" width="7" height="5" viewBox="0 0 7 5"><path d="M1 1 L3.5 3.5 L6 1" fill="none" stroke="#aaa" stroke-width="1.1" stroke-linecap="round" stroke-linejoin="round"/></svg>
  <div class="abs" style="left:1379px;top:14.5px;width:10.5px;height:10.5px;border-radius:50%;background:#8b8b8b"></div>
  <div class="t" style="left:1382px;top:16px;font-size:8px;font-weight:700;color:#fff">?</div>
  <div class="abs" style="left:400px;top:33px;width:700px;height:4px;background:linear-gradient(90deg,rgba(249,249,249,0),#f8f9f9 10%,#f8f9f9 90%,rgba(249,249,249,0))"></div>
</div>

</body>
</html>
